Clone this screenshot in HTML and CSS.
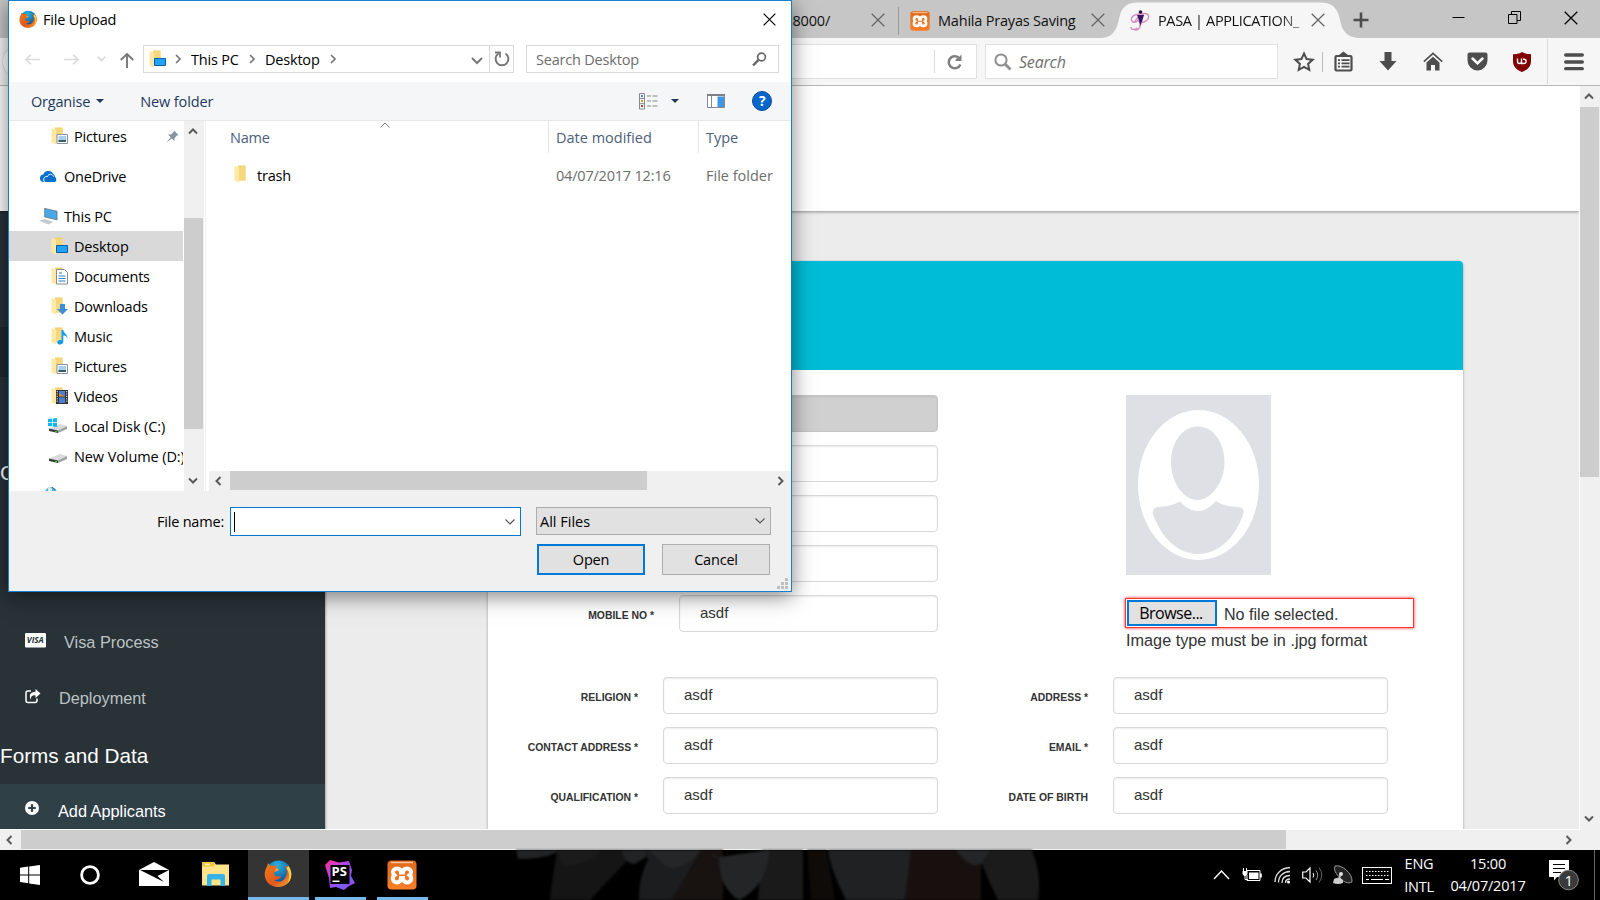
FILE: index.html
```html
<!DOCTYPE html>
<html lang="en">
<head>
<meta charset="utf-8">
<title>PASA | APPLICATION_FORM</title>
<link rel="stylesheet" href="styles.css">
</head>
<body>
<svg width="0" height="0" class="defs" aria-hidden="true">
  <defs>
    <linearGradient id="fold" x1="0" x2="1"><stop offset="0" stop-color="#ffe9a6"/><stop offset="1" stop-color="#f3cf68"/></linearGradient>
    <linearGradient id="fox" x1="0" y1="0" x2="1" y2="1"><stop offset="0" stop-color="#ef7d1c"/><stop offset=".6" stop-color="#e2571b"/><stop offset="1" stop-color="#f6b03a"/></linearGradient>
    <radialGradient id="globe" cx=".45" cy=".2" r=".8"><stop offset="0" stop-color="#28b4e0"/><stop offset="1" stop-color="#0b3c85"/></radialGradient>
    <linearGradient id="xam" x1="0" y1="0" x2="0" y2="1"><stop offset="0" stop-color="#e06a1c"/><stop offset="1" stop-color="#fb7e28"/></linearGradient>
    <linearGradient id="ps" x1="0" y1="0" x2="1" y2="1"><stop offset="0" stop-color="#ff318c"/><stop offset=".4" stop-color="#b345f1"/><stop offset=".75" stop-color="#765af8"/><stop offset="1" stop-color="#c240e8"/></linearGradient>
    <symbol id="folder" viewBox="0 0 17 18"><path d="M4 .5h7.500v15H4z" fill="#f3cf6e"/><path d="M4.500 1.500h7v14h-7z" fill="#f6d77d"/><path d="M.5 1l4.500 1.500v15L.5 15.500z" fill="#ffe9a6"/></symbol>
    <symbol id="firefox" viewBox="0 0 28 28">
      <circle cx="14.500" cy="13.500" r="13" fill="url(#globe)"/>
      <path d="M24.500 6c3.500 5 4 11 .5 16C20 28 10 29 4 23-.5 18 0 11 3 6.500L4 3l2.500 3c1.500-.5 3-.5 4 0l2.500-1-1 3 2 2.500-4 2c-.5 2 1 4 4 4l3-.5c-1 3-4 4.500-7 4 3 2.500 8 2 10.500-1s3-7 2-10l-1-3z" fill="url(#fox)"/>
      <path d="M24.500 6c4 6 3.500 13-1 17 2.500-5 2-11-1-14.500z" fill="#fcd23c"/>
      <path d="M10 12c2-1.500 4-1 5-2.500L12.500 8z" fill="#f7a646"/>
    </symbol>
    <symbol id="xampp" viewBox="0 0 30 30">
      <rect x=".5" y=".5" width="29" height="29" rx="4" fill="url(#xam)"/><path d="M4 2.500h22" stroke="#ffc79a" stroke-width="1.500"/>
      <path d="M10 8.500c2.500 0 4 1.500 4 4h2c0-2.500 1.500-4 4-4s4 1.800 4 3.800c0 1.400-.8 2.300-1.500 2.900 1 .7 1.700 1.700 1.700 3.200 0 2.200-1.700 4-4.200 4s-4-1.800-4-4.400h-2c0 2.600-1.500 4.400-4 4.400s-4.200-1.800-4.200-4c0-1.500.7-2.500 1.700-3.200-.7-.6-1.500-1.500-1.500-2.900 0-2 1.500-3.800 4-3.800z" fill="none" stroke="#fff" stroke-width="4"/>
    </symbol>
    <symbol id="drive" viewBox="0 0 18 10"><path d="M0 5.500L11 1l7 2-9 4.500z" fill="#d9dadb"/><path d="M0 5.500l9 2v2.500L0 8z" fill="#3b3d3e"/><path d="M9 7.500L18 3v3l-9 4z" fill="#9da0a3"/><path d="M6 8h2v1H6z" fill="#35d12c"/></symbol>
    <symbol id="up" viewBox="0 0 10 7"><path d="M1 5.500l4-4 4 4" fill="none" stroke="#5a5a5a" stroke-width="2"/></symbol>
    <symbol id="down" viewBox="0 0 10 7"><path d="M1 1.500l4 4 4-4" fill="none" stroke="#5a5a5a" stroke-width="2"/></symbol>
    <symbol id="left" viewBox="0 0 7 10"><path d="M5.500 1l-4 4 4 4" fill="none" stroke="#5a5a5a" stroke-width="2"/></symbol>
    <symbol id="right" viewBox="0 0 7 10"><path d="M1.500 1l4 4-4 4" fill="none" stroke="#5a5a5a" stroke-width="2"/></symbol>
    <symbol id="crumb" viewBox="0 0 6 10"><path d="M1 1l4 4-4 4" fill="none" stroke="#757575" stroke-width="1.600"/></symbol>
    <symbol id="thin" viewBox="0 0 10 6"><path d="M.5.5L5 5 9.500.5" fill="none" stroke="#555" stroke-width="1.200"/></symbol>
    <symbol id="cross" viewBox="0 0 14 14"><path d="M.7.7l12.600 12.600M13.300.7L.7 13.300" fill="none" stroke="currentColor" stroke-width="1.300"/></symbol>
  </defs>
</svg>

<div class="screen">
  <div class="browser">
    <div class="tabstrip">
      <div class="tab tab-local"><span>localhost:8000/</span><svg class="tab-x" width="14" height="14"><use href="#cross"/></svg></div>
      <div class="tab tab-mahila"><svg width="20" height="20"><use href="#xampp"/></svg><span class="tab-name">Mahila Prayas Saving</span><svg class="tab-x" width="14" height="14"><use href="#cross"/></svg></div>
      <div class="tab tab-active">
        <svg class="tab-shape" width="256" height="38" viewBox="0 0 256 38"><path d="M0 38C12 37 15 28 17 19 19 8 24 2.500 36 2.500H218C230 2.500 236 8 238 20 240 30 244 37 256 38z" fill="#f6f6f6"/></svg>
        <svg class="fav" width="20" height="21" viewBox="0 0 20 21"><path d="M2 11C-1 6 8 3 15 3.500c5 .5 5 6-1 8.500-3 1-5 0-5-1M4 19.500c5 2 6-2 8-10M2 11c2 3 6 0 8-3M1 17c0 3 4 3 6 1M5 12c1-4 5-7 9-7" fill="none" stroke="#cf8fbf" stroke-width="1.400"/><circle cx="10.500" cy="2" r="1.800" fill="#2c0f4a"/><path d="M7 5h7l-1.500 5-2.500 6-1-6z" fill="#3c1460"/></svg>
        <span class="tab-title">PASA | APPLICATION_</span>
        <svg class="tab-x" width="14" height="14"><use href="#cross"/></svg>
      </div>
      <svg class="plus" width="16" height="16" viewBox="0 0 16 16"><path d="M8 .5v15M.5 8h15" stroke="#4d4d4d" stroke-width="2.600"/></svg>
      <div class="winbtns">
        <svg width="13" height="13" viewBox="0 0 13 13"><path d="M.5 6.500h12" stroke="#000"/></svg>
        <svg width="13" height="13" viewBox="0 0 13 13"><path d="M.5 3.500h8.500v9H.5zM3.500 3.500v-3h9v9H9" fill="none" stroke="#000"/></svg>
        <svg width="14" height="14"><use href="#cross"/></svg>
      </div>
    </div>
    <div class="toolbar">
      <div class="url"><span class="url-sep"></span><svg width="16" height="16" viewBox="0 0 16 16"><path d="M13.400 10.500A6 6 0 1 1 11.500 3.500" fill="none" stroke="#808080" stroke-width="2.500"/><path d="M8.500 7V5.500L12 3l2.500-2.500V7z" fill="#808080"/></svg></div>
      <div class="websearch"><svg width="18" height="18" viewBox="0 0 18 18"><circle cx="7" cy="7" r="5.600" fill="none" stroke="#8f8f8f" stroke-width="2"/><path d="M11 11l5.500 5.500" stroke="#8f8f8f" stroke-width="2.800"/></svg><span>Search</span></div>
      <div class="tools">
        <svg width="22" height="22" viewBox="0 0 22 22"><path d="M11 2.500l2.600 5.600 6 .7-4.500 4.100 1.200 6L11 15.900l-5.300 3 1.200-6L2.400 8.800l6-.7z" fill="none" stroke="#4d4d4d" stroke-width="2"/></svg>
        <span class="tool-sep"></span>
        <svg class="t-list" width="19" height="21" viewBox="0 0 19 21"><path d="M2.500 5h14q1 0 1 1v12.500q0 1-1 1h-14q-1 0-1-1V6q0-1 1-1z" fill="none" stroke="#4d4d4d" stroke-width="2.200"/><path d="M5 4l4.500-3.500L14 4v2H5z" fill="#4d4d4d"/><path d="M4 9.200h2M7.500 9.200h8M4 12.400h2M7.500 12.400h8M4 15.600h2M7.500 15.600h8" stroke="#4d4d4d" stroke-width="1.700"/></svg>
        <svg class="t-down" width="18" height="19" viewBox="0 0 18 19"><path d="M5.500 0h7v9H17.500L9 18.500.5 9h5z" fill="#4d4d4d"/></svg>
        <svg class="t-home" width="20" height="19" viewBox="0 0 20 19"><path d="M.8 9.700L10 1.400l9.200 8.300" fill="none" stroke="#4d4d4d" stroke-width="1.600"/><path d="M3.500 10.500L10 4.800l6.500 5.700V18.500H12V13H8v5.500H3.500z" fill="#4d4d4d"/></svg>
        <svg class="t-pocket" width="21" height="19" viewBox="0 0 21 19"><path d="M2.500.5h16q2 0 2 2V8.500A10 10 0 0 1 .5 8.500v-6q0-2 2-2z" fill="#4d4d4d"/><path d="M5.500 6.500l5 4.700 5-4.700" fill="none" stroke="#fff" stroke-width="2.500" stroke-linecap="round"/></svg>
        <svg class="t-ub" width="18" height="20" viewBox="0 0 18 20"><path d="M9 0c3 2 6 2.200 9 2.200V9c0 6-4 9-9 11C4 18 0 15 0 9V2.200C3 2.200 6 2 9 0z" fill="#800000"/><path d="M4.500 6.500v3q0 2 2 2t2-2v-3M8.500 9v2.500h2.500a2 2 0 1 0 0-4.200h-1" fill="none" stroke="#fff" stroke-width="1.400"/></svg>
        <span class="menu-sep"></span>
        <svg class="t-menu" width="20" height="18" viewBox="0 0 20 18"><path d="M1.700 2h16.600M1.700 9h16.600M1.700 15.700h16.600" stroke="#4d4d4d" stroke-width="3.300" stroke-linecap="round"/></svg>
      </div>
    </div>
    <div class="viewport">
      <div class="page">
        <div class="site-head"></div>
        <div class="site-main">
          <nav class="side">
            <div class="side-band"></div>
            <div class="side-head">Candidates</div>
            <div class="side-gap"><span></span></div>
            <div class="side-item visa"><svg width="21" height="15" viewBox="0 0 21 15"><rect width="21" height="14.500" rx="1.200" fill="#fff"/><text x="1.800" y="10.300" font-family="Open Sans" font-size="8.200" font-weight="bold" font-style="italic" fill="#263238">VISA</text></svg><span>Visa Process</span></div>
            <div class="side-item deploy"><svg width="16" height="15" viewBox="0 0 16 15"><path d="M6 2H3Q1 2 1 4v7.500q0 2 2 2h7q2 0 2-2V9.500" fill="none" stroke="#fff" stroke-width="1.500"/><path d="M10.500 0L15.500 4.500l-5 4.500V6.300C7 6.300 5.500 7.500 6 11 3.500 7 5 2.800 10.500 2.800z" fill="#fff"/></svg><span>Deployment</span></div>
            <div class="side-title">Forms and Data</div>
            <div class="side-item add"><svg width="14" height="14" viewBox="0 0 14 14"><circle cx="7" cy="7" r="7" fill="#fff"/><path d="M7 3.200v7.600M3.200 7h7.600" stroke="#2f4047" stroke-width="2.200"/></svg><span>Add Applicants</span></div>
          </nav>
          <section class="card">
            <div class="card-top"></div>
            <div class="form-top">
              <div class="rows">
                <div class="row"><label></label><div class="field off"></div></div>
                <div class="row"><label></label><div class="field"></div></div>
                <div class="row"><label></label><div class="field"></div></div>
                <div class="row"><label></label><div class="field"></div></div>
                <div class="row"><label>MOBILE NO *</label><div class="field">asdf</div></div>
              </div>
              <div class="photo">
                <svg width="145" height="180" viewBox="0 0 145 180"><rect width="145" height="180" fill="#dfe0e5"/><ellipse cx="72.500" cy="90" rx="60.500" ry="75" fill="#fff"/><path d="M71.500 31.500c16 0 27 16 27 36 0 19-13 37.500-27 37.500S45 87 45 68c0-20 11-36.500 26.500-36.500zM54 106.500c5 5 10 9.500 18 9.500s13-5 18-10c7 5 15 5.500 22 6 4 0 6.500 3 5.500 6C111 139 95 159 72 159S34 139 27 119c-1-4 1-6.500 5-7 8-.5 15-1.500 22-5.500z" fill="#dfe0e5"/></svg>
                <div class="file"><button>Browse...</button><span>No file selected.</span></div>
                <div class="hint">Image type must be in .jpg format</div>
              </div>
            </div>
            <div class="form-grid">
              <div class="row"><label>RELIGION *</label><div class="field">asdf</div></div>
              <div class="row"><label>ADDRESS *</label><div class="field">asdf</div></div>
              <div class="row"><label>CONTACT ADDRESS *</label><div class="field">asdf</div></div>
              <div class="row"><label>EMAIL *</label><div class="field">asdf</div></div>
              <div class="row"><label>QUALIFICATION *</label><div class="field">asdf</div></div>
              <div class="row"><label>DATE OF BIRTH</label><div class="field">asdf</div></div>
            </div>
          </section>
        </div>
      </div>
      <div class="vbar"><svg width="10" height="7"><use href="#up"/></svg><i></i><svg class="end" width="10" height="7"><use href="#down"/></svg></div>
    </div>
    <div class="hbar"><svg width="7" height="10"><use href="#left"/></svg><i></i><svg class="end" width="7" height="10"><use href="#right"/></svg></div>
  </div>

  <div class="taskbar">
    <svg class="petals" width="550" height="50" viewBox="0 0 550 50">
      <path d="M18 0h44c-8 6-22 9-42 9z" fill="#222324"/>
      <path d="M59 0h80L92 50H52c2-20 4-30 7-50z" fill="#161516"/>
      <path d="M59 0h44c-8 10-26 17-38 15z" fill="#1b1b1c"/>
      <path d="M124 0h28l-4 7-11 7c-8 0-12-6-13-14z" fill="#222324"/>
      <path d="M146 0h60l-12 18-20 32h-33c0-20 4-30 9-40z" fill="#1c1d1f"/>
      <path d="M150 0h52c-4 8-18 18-28 18-8-2-12-6-15-11z" fill="#252627"/>
      <path d="M203 0h22v50h-51z" fill="#181210"/>
      <path d="M264 0h41v50h-45z" fill="#1a1a1b"/>
      <path d="M212 3q5 6 9 4l50-7c0 22-12 42-30 50-14-8-20-24-20-42z" fill="#242526"/>
      <path d="M309 0h20l8 50h-24z" fill="#0e0b09"/>
      <path d="M330 0h83v22c0 12-3 20-7 28h-58c-8-16-16-34-18-50z" fill="#202122"/>
      <path d="M413 0h70v50h-76z" fill="#17100e"/>
      <path d="M484 0h50c8 20 8 36 6 50h-40c-8-16-12-26-16-36z" fill="#1b1b1c"/>
      <path d="M458 0h34l-9 14c-9 4-18-4-25-14z" fill="#242526"/>
    </svg>
    <div class="apps">
      <svg class="a-win" width="20" height="20" viewBox="0 0 20 20"><path d="M0 2.800L8.200 1.600V9.400H0zM9.200 1.500L20 0v9.400H9.200zM0 10.400h8.200v7.900L0 17.100zM9.200 10.400H20V20L9.200 18.500z" fill="#fff"/></svg>
      <svg class="a-ring" width="20" height="20" viewBox="0 0 20 20"><circle cx="10" cy="10" r="8.400" fill="none" stroke="#fff" stroke-width="2.800"/></svg>
      <svg class="a-mail" width="30" height="24" viewBox="0 0 30 24"><path d="M0 8L15 0l15 8v16H0z" fill="#fff"/><path d="M1 8h29l-11.500 6 6.500 6z" fill="#000"/></svg>
      <svg class="a-exp" width="28" height="24" viewBox="0 0 28 24"><path d="M0 1q0-1 1-1h11l2 2.500h13v21H0z" fill="#ffe38b"/><path d="M0 0h11l2 2.500-1.500 2H0z" fill="#f5c43c"/><path d="M3 1.700h5v1.500H3z" fill="#fff6c8"/><path d="M5 24V14q0-2 2-2h14q2 0 2 2v10h-4.500v-6.500h-9V24z" fill="#35b3e8"/></svg>
      <div class="a-cell a-fox"><svg width="28" height="28"><use href="#firefox"/></svg></div>
      <div class="a-cell a-ps"><svg width="30" height="30" viewBox="0 0 30 30"><path d="M0 5L5 0l9 2.500L24 1l3 9-1 6 4 7-6 3-5 4-8-3-6 1-1-10z" fill="url(#ps)"/><rect x="5.500" y="5" width="19" height="19" fill="#000"/><path d="M7.500 20.500h7v1.500h-7z" fill="#fff"/><text x="6.500" y="16" font-family="Open Sans" font-size="13" font-weight="bold" fill="#fff">PS</text></svg></div>
      <div class="a-cell a-xam"><svg width="30" height="30"><use href="#xampp"/></svg></div>
    </div>
    <div class="tray">
      <svg width="17" height="10" viewBox="0 0 17 10"><path d="M1 9l7.500-8L16 9" fill="none" stroke="#fff" stroke-width="1.400"/></svg>
      <svg class="y-bat" width="20" height="15" viewBox="0 0 20 15"><path d="M4 2.500h14v10H5V7" fill="none" stroke="#fff"/><path d="M7 4.500h9.500v6.500H7zM18 5.500h1.800v4H18zM.5 3h5v3l-1.500 2H2L.5 6z" fill="#fff"/><path d="M1.500 0v3M4.500 0v3M3 8v3.500h3" fill="none" stroke="#fff"/></svg>
      <svg class="y-wifi" width="17" height="18" viewBox="0 0 17 18"><path d="M1 16C1 8 7 2 16 1.500M4.500 16.500C4.500 10 9 5.800 16 5.500M8 17c0-5 3-7.500 8-7.500M11.500 17c0-2.500 2-4 4.500-4" fill="none" stroke="#ddd" stroke-width="1.300"/><circle cx="14.500" cy="16" r="1.500" fill="#fff"/></svg>
      <svg class="y-vol" width="21" height="18" viewBox="0 0 21 18"><path d="M.7 6h3.300l4-4v14l-4-4H.7z" fill="none" stroke="#fff" stroke-width="1.200"/><path d="M11 7q1.500 2 0 4.500" stroke="#fff" fill="none"/><path d="M14 4.500q3.500 4.500 0 9.500" stroke="#999" fill="none"/><path d="M17 1.500q5.500 7.500 0 15" stroke="#666" fill="none"/></svg>
      <svg class="y-dish" width="20" height="20" viewBox="0 0 20 20"><path d="M2 1C8-1 20 8 19 17c-4 2-8 0-11-3S0 6 2 1z" fill="#222" stroke="#999"/><path d="M8 8L6 14" stroke="#bbb" stroke-width="2"/><circle cx="8" cy="9" r="2" fill="#ddd"/><path d="M1 14q5-3 9 1v3q-5 2-10 0z" fill="#ccc"/></svg>
      <svg class="y-kbd" width="30" height="17" viewBox="0 0 30 17"><rect x=".5" y=".5" width="29" height="16" fill="none" stroke="#fff"/><path d="M4 4.500h23M4 8.500h23" stroke="#fff" stroke-dasharray="1.500 1.500"/><path d="M4 12.500h3M9 12.500h12M23 12.500h4" stroke="#fff"/></svg>
      <div class="y-lang"><span>ENG</span><span>INTL</span></div>
      <div class="y-clock"><span>15:00</span><span>04/07/2017</span></div>
      <svg class="y-note" width="30" height="31" viewBox="0 0 30 31"><path d="M0 0h20v17H8l-3 3.500V17H0z" fill="#fff"/><path d="M4 4.500h12M4 8.500h12M4 12.500h8" stroke="#000"/><circle cx="19.500" cy="20" r="9.800" fill="#3a3a3a" stroke="#888"/><text x="15.500" y="25.500" font-family="Open Sans" font-size="15" fill="#fff">1</text></svg>
      <span class="peek"></span>
    </div>
  </div>

  <div class="dialog">
    <div class="d-title"><svg width="18" height="19" viewBox="0 0 28 28"><use href="#firefox"/></svg><span>File Upload</span><svg class="d-close" width="13" height="13"><use href="#cross"/></svg></div>
    <div class="d-nav">
      <svg class="n-back" width="15" height="11" viewBox="0 0 15 11"><path d="M6 .7L1 5.500l5 4.800M1 5.500h14" fill="none" stroke="#dcdcdc" stroke-width="1.700"/></svg>
      <svg class="n-fwd" width="15" height="11" viewBox="0 0 15 11"><path d="M9 .7l5 4.800-5 4.800M14 5.500H0" fill="none" stroke="#dcdcdc" stroke-width="1.700"/></svg>
      <svg class="n-rec" width="9" height="6" viewBox="0 0 9 6"><path d="M.7.7l3.800 4L8.300.7" fill="none" stroke="#dcdcdc" stroke-width="1.700"/></svg>
      <svg class="n-up" width="14" height="15" viewBox="0 0 14 15"><path d="M.8 7L7 1l6.200 6M7 1v14" fill="none" stroke="#777" stroke-width="1.900"/></svg>
      <div class="addr">
        <svg width="17" height="18" viewBox="0 0 17 18"><use href="#folder" width="17" height="18"/><path d="M5.500 8.500h11v7h-11z" fill="#1ea3ff" stroke="#0a5fa5"/></svg>
        <svg class="c1" width="6" height="10"><use href="#crumb"/></svg><span class="pc">This PC</span><svg width="6" height="10"><use href="#crumb"/></svg><span class="dk">Desktop</span><svg width="6" height="10"><use href="#crumb"/></svg>
        <svg class="a-dd" width="12" height="8" viewBox="0 0 12 8"><path d="M1 1l5 5 5-5" fill="none" stroke="#777" stroke-width="2"/></svg>
        <span class="a-ref"><svg width="16" height="16" viewBox="0 0 16 16"><path d="M11.500 2.500A6.400 6.400 0 1 1 4.500 2.500" fill="none" stroke="#777" stroke-width="1.900"/><path d="M1 1.500h5v5" fill="none" stroke="#777" stroke-width="1.800"/></svg></span>
      </div>
      <div class="d-search"><span>Search Desktop</span><svg width="15" height="15" viewBox="0 0 15 15"><circle cx="9.500" cy="5" r="3.900" fill="none" stroke="#666" stroke-width="1.700"/><path d="M6.500 7.800L1 13.500" stroke="#666" stroke-width="2.400"/></svg></div>
    </div>
    <div class="d-bar">
      <span>Organise</span><b class="tri"></b><span class="nf">New folder</span>
      <svg class="b-view" width="19" height="17" viewBox="0 0 19 17"><path d="M.5.5h5v15.500h-5zM.5 5.500h5M.5 10.700h5M8 3h4M13.500 3h5M8 8h4M13.500 8h5M8 13h4M13.500 13h5" fill="none" stroke="#888"/><path d="M2 2h2v2H2z" fill="#4a7fc0"/><path d="M2 7h2v2H2z" fill="#c0973a"/><path d="M2 12h2v2H2z" fill="#b04030"/></svg>
      <b class="tri t2"></b>
      <svg class="b-pane" width="18" height="14" viewBox="0 0 18 14"><path d="M.5.500h17v13H.5zM4.500 2v11" fill="#fff" stroke="#868a8e"/><path d="M0 0h18v2H0z" fill="#7d8085"/><path d="M10.500 2.500H17v10.500h-6.500z" fill="#3d97e5"/></svg>
      <span class="help">?</span>
    </div>
    <div class="d-body">
      <div class="tree">
        <div class="leaf"><svg width="17" height="18" viewBox="0 0 17 18"><use href="#folder" width="17" height="18"/><path d="M6 7.500h10.500v9H6z" fill="#fff" stroke="#8a93a0"/><path d="M7.500 9h7.500v6H7.500z" fill="#a8cdf0"/><path d="M7.500 13h7.500v2H7.500z" fill="#35605c"/></svg><span>Pictures</span><svg class="pin" width="13" height="13" viewBox="0 0 13 13"><path d="M8 .5L12.500 5l-1.500.5-2.500 2.500v3L5.700 8.400.5 12.500 4.600 7.300 2 4.500h3L7.500 2z" fill="#8595a0"/></svg></div>
        <div class="leaf root one"><svg width="19" height="13" viewBox="0 0 19 13"><path d="M4 12a3.800 3.800 0 0 1 .3-7.500A5.500 5.500 0 0 1 14 3.500 4 4 0 0 1 16 7a3 3 0 0 1 0 5z" fill="#0b6fd0"/><path d="M5.500 12c-2-3 0-6 3-5.500 1-3 5-3 6 0" fill="none" stroke="#fff"/></svg><span>OneDrive</span></div>
        <div class="leaf root"><svg width="20" height="17" viewBox="0 0 20 17"><path d="M6 0l13 3v9L6 9z" fill="#4aa9e8" stroke="#5f6d7a" stroke-width=".8"/><path d="M0 13l6-2 9 3-5 3z" fill="#c5c9cd"/></svg><span>This PC</span></div>
        <div class="leaf sel"><svg width="17" height="18" viewBox="0 0 17 18"><use href="#folder" width="17" height="18"/><path d="M5.500 8.500h11v7h-11z" fill="#1ea3ff" stroke="#0a5fa5"/></svg><span>Desktop</span></div>
        <div class="leaf"><svg width="17" height="18" viewBox="0 0 17 18"><use href="#folder" width="17" height="18"/><path d="M5.500 2.500h8l3 3V17h-11z" fill="#fff" stroke="#8a8a8a"/><path d="M8 6h3M7.500 9h7M7.500 11.500h7M7.500 14h7" stroke="#2d82bf" stroke-width="1.200"/></svg><span>Documents</span></div>
        <div class="leaf"><svg width="17" height="18" viewBox="0 0 17 18"><use href="#folder" width="17" height="18"/><path d="M9 7h5v5h3l-5.500 5.500L6 12h3z" fill="#3c8ed9"/></svg><span>Downloads</span></div>
        <div class="leaf"><svg width="17" height="18" viewBox="0 0 17 18"><use href="#folder" width="17" height="18"/><path d="M10.500 3h1.800c0 3 4 4 4.500 8.500-1.500-3-3-3-4.500-3V15c0 3-6 3.500-6 .5 0-2 2.500-3 4.200-2z" fill="#0f9bf5"/></svg><span>Music</span></div>
        <div class="leaf"><svg width="17" height="18" viewBox="0 0 17 18"><use href="#folder" width="17" height="18"/><path d="M6 7.500h10.500v9H6z" fill="#fff" stroke="#8a93a0"/><path d="M7.500 9h7.500v6H7.500z" fill="#a8cdf0"/><path d="M7.500 13h7.500v2H7.500z" fill="#35605c"/></svg><span>Pictures</span></div>
        <div class="leaf"><svg width="17" height="18" viewBox="0 0 17 18"><use href="#folder" width="17" height="18"/><path d="M5 3h12v14H5z" fill="#333"/><path d="M8 4h6v5.500H8zM8 10.500h6v5.500H8z" fill="#4b7fd6"/><path d="M8 6l6 3.500H8z" fill="#d08a2d"/><path d="M6.200 4v12M15.700 4v12" stroke="#eee" stroke-dasharray="1.200 1.200"/></svg><span>Videos</span></div>
        <div class="leaf drv"><svg width="20" height="16" viewBox="0 0 20 16"><use href="#drive" x="1" y="5" width="18" height="10"/><path d="M0 1l4-.5V4H0zM4.800.5L9 0v4H4.800zM0 4.800h4v3.500L0 8zM4.800 4.800H9V9l-4.200-.5z" fill="#12b4ef"/></svg><span>Local Disk (C:)</span></div>
        <div class="leaf drv"><svg width="20" height="16" viewBox="0 0 20 16"><use href="#drive" x="1" y="5" width="18" height="10"/></svg><span>New Volume (D:)</span></div>
        <div class="net"><svg width="16" height="16" viewBox="0 0 16 16"><circle cx="8" cy="8" r="6" fill="#58aed1"/><path d="M5 3q3-2 4 1T5 6z" fill="#d4eef5"/><path d="M9 2l3 3" stroke="#2677a0"/></svg></div>
      </div>
      <div class="t-scroll"><svg width="10" height="7"><use href="#up"/></svg><i></i><svg class="end" width="10" height="7"><use href="#down"/></svg></div>
      <div class="list">
        <div class="l-head"><span class="h-name">Name<svg width="10" height="6" viewBox="0 0 10 6"><path d="M.5 5.500L5 1l4.500 4.500" fill="none" stroke="#777"/></svg></span><span class="h-date">Date modified</span><span class="h-type">Type</span></div>
        <div class="l-row"><span class="r-name"><svg width="17" height="18"><use href="#folder"/></svg>trash</span><span class="r-date">04/07/2017 12:16</span><span class="r-type">File folder</span></div>
        <div class="l-scroll"><svg width="7" height="10"><use href="#left"/></svg><i></i><svg class="end" width="7" height="10"><use href="#right"/></svg></div>
      </div>
    </div>
    <div class="d-foot">
      <div class="f-row"><label>File name:</label><div class="f-input"><span class="caret"></span><svg width="10" height="6"><use href="#thin"/></svg></div><div class="f-sel"><span>All Files</span><svg width="10" height="6"><use href="#thin"/></svg></div></div>
      <div class="f-btns"><button class="open">Open</button><button>Cancel</button></div>
      <svg class="grip" width="11" height="11" viewBox="0 0 11 11"><path d="M8 0h3v3H8zM4 4h3v3H4zM8 4h3v3H8zM0 8h3v3H0zM4 8h3v3H4zM8 8h3v3H8z" fill="#bfbfbf"/></svg>
    </div>
  </div>
</div>
</body>
</html>
```
FILE: styles.css
```css
* { box-sizing: border-box; }
body { margin: 0; overflow: hidden; font-family: "Open Sans", "Noto Sans", sans-serif; font-size: 14.5px; letter-spacing: -.2px; color: #000; }
svg { display: block; flex: none; }
svg text { letter-spacing: 0; }
.defs { position: absolute; }
span, label { white-space: nowrap; }
.screen { position: relative; width: 1600px; height: 900px; overflow: hidden; background: #000; }
.browser { height: 850px; display: flex; flex-direction: column; }

/* tab strip */
.tabstrip { height: 38px; flex: none; background: #c6c6c6; display: flex; align-items: center; }
.tab { display: flex; align-items: center; height: 38px; color: #111; padding-top: 3px; }
.tab-x { color: #666; margin-bottom: 1px; }
.tab-local { width: 899px; justify-content: flex-end; padding-right: 14px; }
.tab-local span { margin-right: 41px; }
.tab-local::after { content: ""; width: 1px; height: 28px; background: #999; margin: 0 -14px 0 13px; }
.tab-mahila { width: 203px; padding-left: 11px; }
.tab-name { margin: 0 15px 0 8px; width: 138px; }
.tab-active { position: relative; width: 238px; padding-left: 28px; }
.tab-active > * { position: relative; }
.tab-active .tab-shape { position: absolute; left: 0; top: 0; }
.tab-title { margin: 0 8px; width: 145px; letter-spacing: -.35px; -webkit-mask-image: linear-gradient(90deg, #000 82%, rgba(0,0,0,.4) 100%); mask-image: linear-gradient(90deg, #000 82%, rgba(0,0,0,.4) 100%); }
.plus { margin-left: 13px; margin-top: 1px; }
.winbtns { margin-left: auto; display: flex; gap: 43px; padding: 0 22px 3px 0; }

/* navigation toolbar */
.toolbar { height: 48px; flex: none; background: #f6f6f6; border-bottom: 1px solid #b6b6b6; display: flex; align-items: center; }
.url, .websearch { height: 35px; background: #fff; border: 1px solid #e0e0e0; display: flex; align-items: center; }
.url { width: 975px; margin-left: 2px; border-radius: 18px 1px 1px 18px; justify-content: flex-end; padding-right: 13px; }
.url-sep { width: 1px; height: 23px; background: #ddd; margin-right: 12px; }
.websearch { width: 293px; margin-left: 8px; padding-left: 8px; font-style: italic; font-size: 16px; color: #6f6f6f; }
.websearch span { margin: 1px 0 0 7px; }
.tools { display: flex; align-items: center; height: 47px; padding-left: 15px; }
.tool-sep { width: 1px; height: 20px; background: #bbb; margin-left: 7px; }
.t-list { margin-left: 11px; }
.t-down { margin-left: 26px; }
.t-home { margin-left: 26px; }
.t-pocket { margin-left: 24px; }
.t-ub { margin-left: 25px; }
.menu-sep { width: 1px; height: 45px; background: #d8d8d8; margin: 0 16px; }

/* page */
.viewport { height: 744px; display: flex; flex: none; }
.page { width: 1579px; background: #ececec; overflow: hidden; font-family: "Liberation Sans", Arial, sans-serif; letter-spacing: 0; border-bottom: 1px solid #fff; color: #333; }
.site-head { position: relative; height: 125px; background: #fff; box-shadow: 0 1px 3px rgba(0,0,0,.4); }
.site-main { display: flex; height: 619px; }
.side { width: 325px; background: #283237; color: #bcc2c5; font-size: 16px; box-shadow: 1px 0 2px rgba(0,0,0,.3); }
.side-band { height: 50px; margin-top: 116px; background: #20292d; }
.side-head { height: 80px; padding-top: 84px; font-size: 20.800px; line-height: 24px; color: #fff; width: 20px; }
.side-gap { height: 132px; padding: 125px 0 0 29px; margin-bottom: 20px; }
.side-gap span { display: block; width: 6px; height: 2px; background: #888; }
.side-item { display: flex; height: 56px; align-items: center; padding-left: 25px; }
.side-item span { padding-top: 3px; font-size: 16.300px; }
.side-item svg { margin-bottom: 2px; }
.visa span { margin-left: 18px; }
.deploy span { margin-left: 18px; }
.add span { margin-left: 19px; padding-top: 4px; }
.side-title { font-size: 20.700px; color: #fff; line-height: 24px; height: 59px; padding-top: 19px; white-space: nowrap; }
.side .add { background: #304047; color: #fff; height: 50px; }
.card { width: 975px; height: 600px; margin: 50px 0 0 163px; background: #fff; border-radius: 4px 4px 0 0; box-shadow: 0 1px 3px rgba(0,0,0,.35); }
.card-top { height: 109px; background: #00bcd7; border-radius: 4px 4px 0 0; }
.form-top { display: flex; padding-top: 25px; height: 307px; }
.rows { width: 450px; display: flex; flex-direction: column; gap: 13px; }
.row { display: flex; align-items: center; justify-content: flex-end; gap: 25px; height: 37px; }
.row label { font-size: 10.400px; font-weight: bold; padding-top: 3px; }
.field { width: 275px; height: 37px; border: 1px solid #d8d8d8; border-radius: 4px; box-shadow: inset 0 1px 2px rgba(0,0,0,.08); padding: 0 20px 2px; font-size: 15px; line-height: 34px; background: #fff; }
.rows .field { width: 259px; }
.field.off { background: #d0d0d0; border-color: #c6c6c6; }
.photo { margin-left: 188px; }
.file { display: flex; align-items: center; width: 289px; height: 30px; margin: 23px 0 0 -1px; border: 1px solid #f33; box-shadow: 0 0 3px #f22; padding-left: 1px; font-size: 16.100px; }
.file button { width: 90px; height: 26px; padding: 0 2px 0 0; border: 2px solid #0078d7; background: #e1e1e1; font: 16px "Open Sans", sans-serif; letter-spacing: -.5px; line-height: 22px; }
.file span { margin: 2px 0 0 7px; }
.hint { font-size: 16.250px; margin-top: 3px; white-space: nowrap; line-height: 18px; }
.form-grid { display: grid; grid-template-columns: 450px 450px; row-gap: 13px; }

/* scrollbars */
.vbar { width: 21px; background: #f0f0f0; border-left: 1px solid #fff; display: flex; flex-direction: column; align-items: flex-start; padding-top: 7px; }
.vbar svg { margin-left: 4px; }
.vbar i { width: 19px; height: 370px; margin-top: 7px; background: #cdcdcd; }
.end { margin-top: auto; }
.vbar .end { margin-bottom: 8px; }
.hbar { height: 20px; background: #f0f0f0; display: flex; align-items: center; padding-left: 6px; }
.hbar i { height: 19px; width: 1265px; margin: 0 0 1px 8px; background: #cdcdcd; }
.hbar .end { margin: 0 28px 0 auto; }

/* taskbar */
.taskbar { position: relative; height: 50px; background: #000; color: #fff; display: flex; justify-content: space-between; }
.petals { position: absolute; left: 498px; top: 0; filter: blur(.8px); }
.apps, .tray { display: flex; align-items: center; position: relative; }
.a-win { margin-left: 20px; }
.a-ring { margin-left: 40px; }
.a-mail { margin-left: 39px; margin-bottom: 2px; }
.a-exp { margin-left: 33px; margin-bottom: 2px; }
.a-cell { height: 50px; border-bottom: 3px solid #76b9ed; display: flex; align-items: center; justify-content: center; padding: 2px 2px 0 0; }
.a-fox { width: 61px; margin-left: 18px; background: #343434; padding-top: 0; }
.a-ps { width: 51px; margin-left: 6px; }
.a-xam { width: 51px; margin-left: 11px; }
.y-bat { margin-left: 12px; }
.y-wifi { margin-left: 12px; }
.y-vol { margin-left: 11px; }
.y-dish { margin-left: 10px; }
.y-kbd { margin-left: 9px; }
.y-lang, .y-clock { display: flex; flex-direction: column; align-items: center; line-height: 22.500px; }
.y-lang { width: 32px; margin-left: 11px; padding-top: 1px; }
.y-clock { width: 80px; margin-left: 13px; }
.y-note { margin-left: 21px; }
.peek { width: 1px; height: 50px; background: #666; margin: 0 5px 0 15px; }

/* file dialog */
.dialog { position: absolute; left: 8px; top: 0; width: 784px; height: 592px; border: 1px solid #1a7fd0; background: #fff; box-shadow: 0 4px 20px rgba(0,0,0,.5); display: flex; flex-direction: column; }
.d-title { height: 36px; display: flex; align-items: center; padding: 0 15px 0 10px; }
.d-title span { margin-left: 6px; }
.d-close { margin-left: auto; }
.d-nav { height: 45px; display: flex; align-items: center; padding: 0 0 1px 16px; }
.n-fwd { margin-left: 24px; }
.n-rec { margin-left: 18px; }
.n-up { margin-left: 14px; margin-top: 2px; }
.addr, .d-search { height: 28px; border: 1px solid #d9d9d9; display: flex; align-items: center; }
.addr { width: 371px; margin-left: 9px; padding-left: 5px; }
.addr .c1 { margin-left: 9px; }
.addr .pc { margin: 0 11px 0 10px; width: 47px; }
.addr .dk { margin: 0 11px 0 10px; width: 54px; }
.a-dd { margin: 3px 6px 0 auto; }
.a-ref { width: 24px; height: 26px; border-left: 1px solid #d9d9d9; display: flex; align-items: center; justify-content: center; }
.d-search { width: 253px; margin-left: 12px; padding: 0 11px 0 9px; justify-content: space-between; color: #6d6d6d; }
.d-bar { height: 39px; background: #f5f6f8; border-bottom: 1px solid #e5e7ea; display: flex; align-items: center; padding-left: 22px; color: #1e395b; }
.tri { border: 4px solid transparent; border-top-color: #1e395b; border-bottom: 0; margin-left: 6px; }
.nf { margin-left: 36px; width: 75px; letter-spacing: -.1px; }
.b-view { margin-left: 424px; }
.t2 { margin-left: 13px; }
.b-pane { margin-left: 28px; }
.help { width: 20px; height: 20px; margin-left: 27px; border-radius: 50%; background: #0566cc; border: 1px solid #0b4c99; color: #fff; font-weight: bold; text-align: center; line-height: 18px; font-size: 14px; }
.d-body { height: 370px; display: flex; }
.tree { width: 175px; overflow: hidden; }
.leaf { display: flex; align-items: center; height: 30px; width: 174px; padding-left: 42px; overflow: hidden; }
.leaf span { margin-left: 6px; }
.leaf:first-child { margin-bottom: 10px; }
.leaf .pin { margin-left: auto; margin-right: 4px; }
.root { padding-left: 30px; }
.root svg { width: 19px; }
.root.one { margin-bottom: 10px; }
.drv { padding-left: 39px; }
.drv span { letter-spacing: -.1px; }
.sel { background: #d9d9d9; }
.net { padding: 14px 0 0 34px; }
.t-scroll { width: 20px; background: #f0f0f0; display: flex; flex-direction: column; padding-top: 7px; }
.t-scroll svg { margin-left: 4px; }
.t-scroll i { width: 19px; height: 211px; margin-top: 83px; background: #cdcdcd; }
.t-scroll .end { margin-bottom: 7px; }
.list { width: 586px; margin-left: 1px; border-left: 1px solid #f0f0f0; display: flex; flex-direction: column; }
.l-head { display: flex; height: 32px; color: #4c607a; }
.l-head span, .l-row span { display: flex; align-items: center; }
.h-name { position: relative; width: 342px; padding-left: 24px; }
.h-name svg { position: absolute; left: 174px; top: 1px; }
.l-head .h-date { width: 150px; border-left: 1px solid #e5e5e5; padding-left: 7px; letter-spacing: 0; }
.l-head .h-type { border-left: 1px solid #e5e5e5; padding-left: 7px; letter-spacing: 0; }
.l-row { display: flex; height: 30px; margin-top: 7px; color: #6d6d6d; }
.r-name { width: 350px; padding-left: 28px; color: #000; }
.r-name svg { margin: 0 6px 2px 0; }
.r-date { width: 150px; }
.l-row .r-type { letter-spacing: 0; }
.l-scroll { height: 20px; margin: auto 0 0 3px; background: #f0f0f0; display: flex; align-items: center; padding-left: 6px; }
.l-scroll i { width: 417px; height: 19px; margin: 0 0 1px 8px; background: #cdcdcd; }
.l-scroll .end { margin: 0 7px 0 auto; }
.d-foot { position: relative; height: 100px; background: #f0f0f0; padding-top: 16px; }
.f-row { display: flex; align-items: flex-start; }
.f-row label { width: 215px; text-align: right; line-height: 29px; }
.f-input { width: 291px; height: 29px; margin-left: 6px; border: 1px solid #0078d7; background: #fff; display: flex; align-items: center; justify-content: space-between; padding: 0 5px 0 3px; }
.caret { width: 1px; height: 20px; background: #000; }
.f-sel { width: 235px; height: 28px; margin-left: 15px; border: 1px solid #adadad; background: #e1e1e1; display: flex; align-items: center; justify-content: space-between; padding: 0 5px 0 3px; letter-spacing: 0; }
.f-btns { display: flex; gap: 17px; margin: 8px 0 0 528px; }
.f-btns button { width: 108px; height: 31px; padding: 0; border: 1px solid #adadad; background: #e1e1e1; font: inherit; letter-spacing: inherit; }
.f-btns .open { border: 2px solid #0078d7; }
.grip { position: absolute; right: 3px; bottom: 2px; }
```
